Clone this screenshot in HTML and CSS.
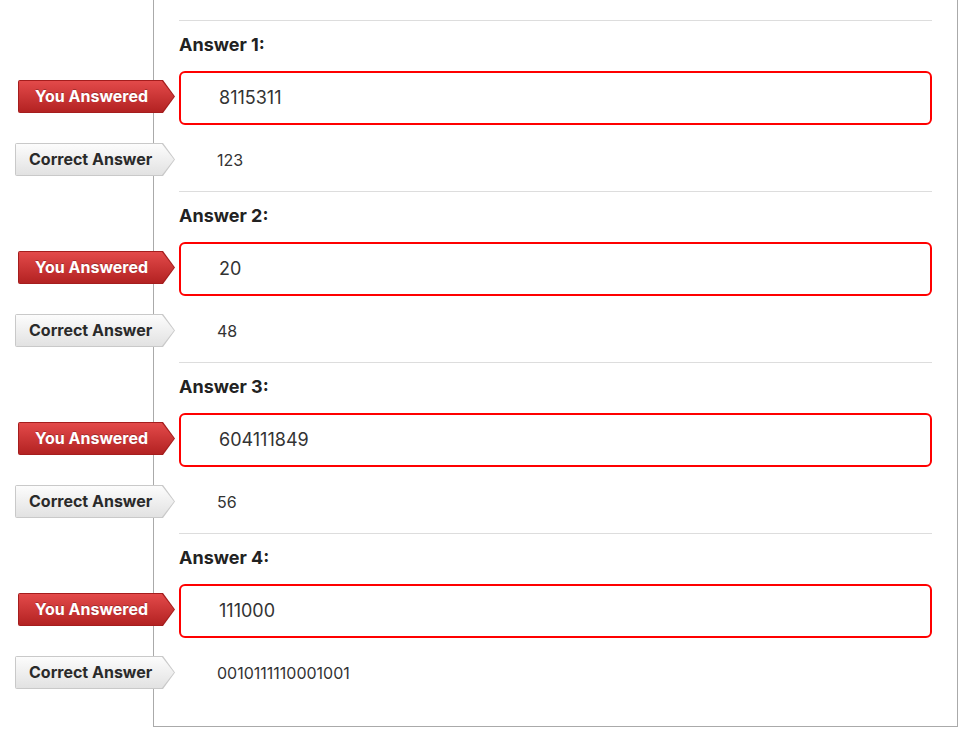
FILE: index.html
```html
<!DOCTYPE html>
<html lang="en">
<head>
    <meta charset="UTF-8">
    <meta name="viewport" content="width=device-width, initial-scale=1.0">
    <title>Quiz Results</title>
    <link rel="stylesheet" href="styles.css">
</head>
<body>
    <div class="results">
        <div class="question">
            <div class="q-label">Answer 1:</div>
            <div class="row">
                <span class="tag tag-wrong"><span class="tag-inner">You Answered</span></span>
                <div class="answer-box">8115311</div>
            </div>
            <div class="row row-correct">
                <span class="tag tag-correct"><span class="tag-inner">Correct Answer</span></span>
                <div class="correct-value">123</div>
            </div>
        </div>

        <div class="question">
            <div class="q-label">Answer 2:</div>
            <div class="row">
                <span class="tag tag-wrong"><span class="tag-inner">You Answered</span></span>
                <div class="answer-box">20</div>
            </div>
            <div class="row row-correct">
                <span class="tag tag-correct"><span class="tag-inner">Correct Answer</span></span>
                <div class="correct-value">48</div>
            </div>
        </div>

        <div class="question">
            <div class="q-label">Answer 3:</div>
            <div class="row">
                <span class="tag tag-wrong"><span class="tag-inner">You Answered</span></span>
                <div class="answer-box">604111849</div>
            </div>
            <div class="row row-correct">
                <span class="tag tag-correct"><span class="tag-inner">Correct Answer</span></span>
                <div class="correct-value">56</div>
            </div>
        </div>

        <div class="question last">
            <div class="q-label">Answer 4:</div>
            <div class="row">
                <span class="tag tag-wrong"><span class="tag-inner">You Answered</span></span>
                <div class="answer-box">111000</div>
            </div>
            <div class="row row-correct">
                <span class="tag tag-correct"><span class="tag-inner">Correct Answer</span></span>
                <div class="correct-value">0010111110001001</div>
            </div>
        </div>
    </div>
</body>
</html>
```

FILE: styles.css
```css
body {
    margin: 0;
    font-family: Inter, Lato, Arial, sans-serif;
    color: #333;
    background: #fff;
}
.results {
    margin-left: 153px;
    width: 753px;
    padding: 20px 25px 37px 25px;
    border: 1px solid #aaa;
    border-top: none;
}
.question {
    border-top: 1px solid #ddd;
    padding-top: 12px;
    padding-bottom: 15px;
}
.question.last {
    padding-bottom: 0;
}
.q-label {
    font-size: 18px;
    font-weight: 700;
    line-height: 24px;
    margin-bottom: 14px;
    color: #222;
}
.row {
    display: flex;
    align-items: flex-start;
    margin-left: -161px;
}
.row-correct {
    align-items: center;
    margin-top: 18px;
    margin-left: -164px;
}
.tag {
    flex: none;
    display: block;
    height: 33px;
    padding: 1px;
    box-sizing: border-box;
    border-radius: 2px;
    clip-path: polygon(0 0, calc(100% - 12px) 0, 100% 50%, calc(100% - 12px) 100%, 0 100%);
}
.tag-inner {
    display: block;
    height: 100%;
    line-height: 30px;
    font-size: 16px;
    font-weight: 700;
    white-space: nowrap;
    clip-path: polygon(0 0, calc(100% - 12px) 0, 100% 50%, calc(100% - 12px) 100%, 0 100%);
}
.tag-wrong {
    width: 157px;
    margin-top: 9px;
    margin-right: 4px;
    background: #a51d1d;
}
.tag-wrong .tag-inner {
    padding-left: 16px;
    color: #fff;
    background: linear-gradient(#e34a4a, #b32222);
    text-shadow: 0 -1px 0 rgba(0, 0, 0, 0.25);
}
.tag-correct {
    width: 160px;
    margin-right: 42px;
    background: #c9c9c9;
}
.tag-correct .tag-inner {
    padding-left: 13px;
    color: #2a2a2a;
    background: linear-gradient(#fcfcfc, #e2e2e2);
}
.answer-box {
    flex: 1;
    height: 54px;
    box-sizing: border-box;
    border: 2px solid #f00;
    border-radius: 6px;
    padding-left: 38px;
    line-height: 50px;
    font-size: 18px;
    color: #333;
}
.correct-value {
    font-size: 16px;
    color: #333;
}
```
